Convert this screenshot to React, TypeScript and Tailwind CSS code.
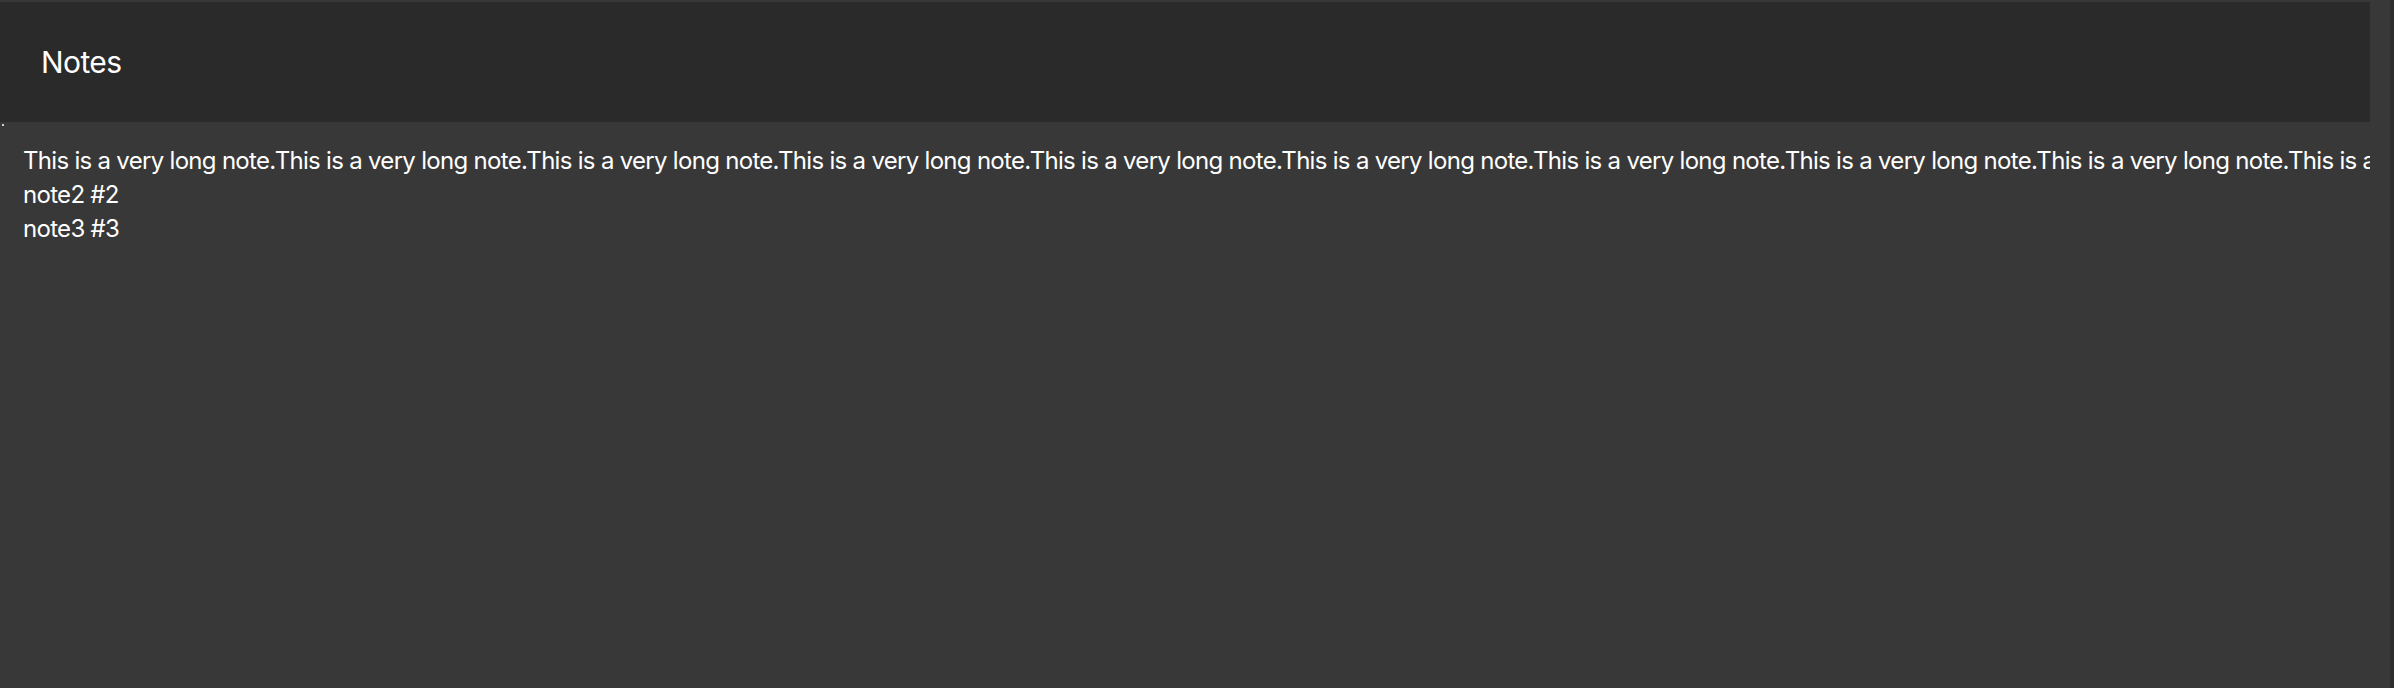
import React from "react";

const longNote = "This is a very long note.".repeat(12);

export default function App() {
  return (
    <div
      className="w-full h-[688px] bg-[#383838] flex flex-row overflow-hidden text-white"
      style={{ fontFamily: "Inter, 'Noto Sans', sans-serif" }}
    >
      <div className="w-[2390px] flex flex-col pt-[2px]">
        <header className="h-[120px] w-[2370px] bg-[#2a2a2a] flex items-center pl-[41px]">
          <h1 className="text-[30px] font-normal leading-none tracking-[-0.6px]">Notes</h1>
        </header>
        <main className="relative w-[2370px] overflow-hidden pt-[22px] pl-[23px]">
          <div className="absolute left-[2px] top-[2px] w-[2px] h-[2px] bg-[#cfcfcf]" />
          <ul className="text-[24px] leading-[34px] tracking-[-0.7px]">
            <li className="whitespace-nowrap">{longNote}</li>
            <li>note2 #2</li>
            <li>note3 #3</li>
          </ul>
        </main>
      </div>
      <div className="flex-1 bg-[#2e2e2e]" />
    </div>
  );
}
